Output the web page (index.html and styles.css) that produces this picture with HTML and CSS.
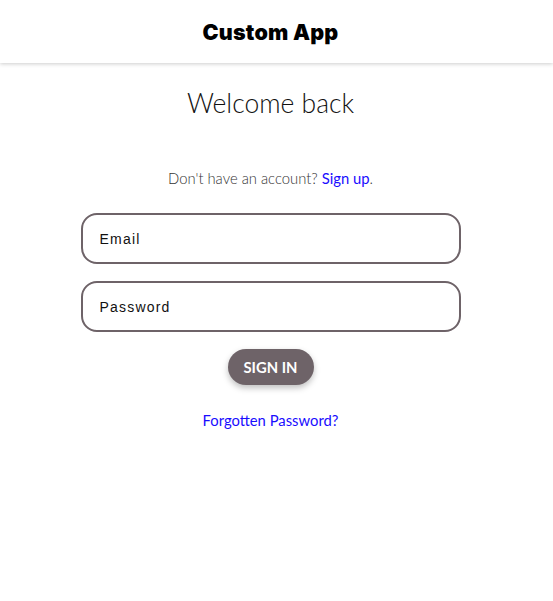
FILE: index.html
```html
<!DOCTYPE html>
<html lang="en">
<head>
  <meta charset="UTF-8" />
  <meta name="viewport" content="width=device-width, initial-scale=1.0"/>
  <title>Custom App</title>
  <link rel="stylesheet" href="styles.css">
</head>
<body>
  <header class="topbar">
    <h1>Custom App</h1>
  </header>

  <main class="login">
    <h2>Welcome back</h2>
    <p class="signup">Don't have an account? <a href="#">Sign up</a>.</p>

    <form class="login-form">
      <input type="email" placeholder="Email">
      <input type="password" placeholder="Password">
      <button type="button">Sign in</button>
    </form>

    <a class="forgot" href="#">Forgotten Password?</a>
  </main>
</body>
</html>
```

FILE: styles.css
```css
body {
  margin: 0;
  font-family: 'Lato', sans-serif;
  color: #222;
  background-color: white;
}

.topbar {
  height: 63px;
  padding-right: 12px;
  display: flex;
  align-items: center;
  justify-content: center;
  box-shadow: 0 1px 4px rgba(0, 0, 0, 0.2);
}

.topbar h1 {
  margin: 0;
  font-family: 'Inter', sans-serif;
  font-weight: 900;
  font-size: 21.5px;
  color: #000;
  letter-spacing: 0.2px;
}

/* content is centred as if a 12px scrollbar took the right edge */
.login {
  padding-right: 12px;
  display: flex;
  flex-direction: column;
  align-items: center;
}

.login h2 {
  margin: 24px 0 0;
  font-weight: 300;
  font-size: 26.5px;
  color: #111;
}

.signup {
  margin: 50px 0 0;
  font-size: 14.8px;
  font-weight: 300;
  color: #333;
}

a {
  color: #1a0dff;
  text-decoration: none;
  font-weight: 400;
}

.login-form {
  margin-top: 26px;
  display: flex;
  flex-direction: column;
  align-items: center;
  gap: 17px;
}

.login-form input {
  box-sizing: border-box;
  width: 380px;
  height: 51px;
  padding: 0 17px;
  border: 2px solid #6e6368;
  border-radius: 16px;
  font-family: 'Liberation Sans', sans-serif;
  font-size: 14px;
  letter-spacing: 1.2px;
  outline: none;
}

.login-form input::placeholder {
  color: #111;
}

.login-form button {
  width: 86px;
  height: 36px;
  border: none;
  border-radius: 18px;
  background-color: #6e6368;
  color: white;
  font-family: 'Lato', sans-serif;
  font-weight: 700;
  font-size: 14.8px;
  text-transform: uppercase;
  box-shadow: 0 3px 6px rgba(0, 0, 0, 0.25);
  cursor: pointer;
}

.forgot {
  margin-top: 26px;
  font-size: 14.8px;
}
```
